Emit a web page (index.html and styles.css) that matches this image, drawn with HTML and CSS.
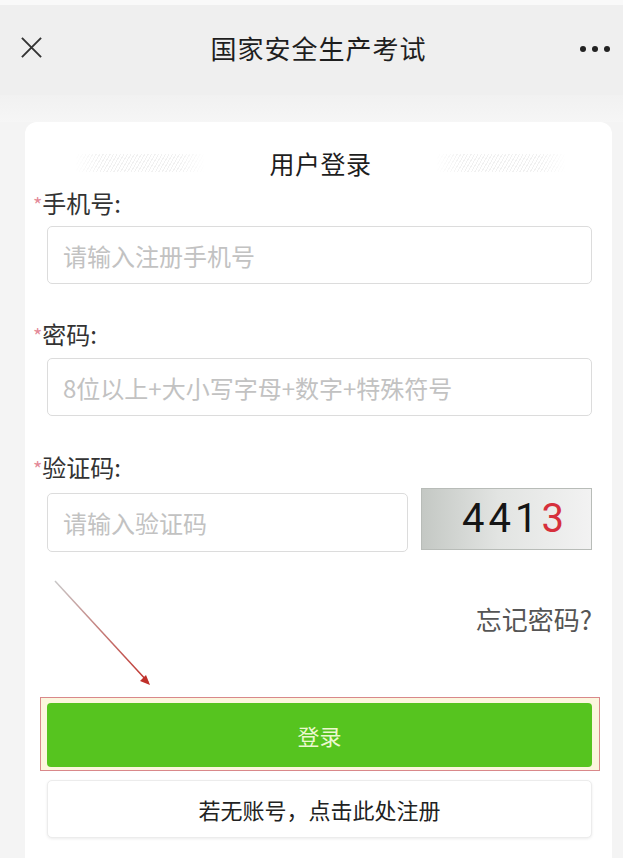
FILE: index.html
```html
<!DOCTYPE html>
<html lang="zh-CN">
<head>
<meta charset="utf-8">
<title>国家安全生产考试</title>
<link rel="stylesheet" href="styles.css">
</head>
<body>
<header class="topbar">
  <svg class="close" viewBox="0 0 24 24" width="24" height="24"><path d="M2 2 L22 22 M22 2 L2 22" stroke="#333" stroke-width="2" fill="none"/></svg>
  <h1 class="topbar-title">国家安全生产考试</h1>
  <span class="more"><i></i><i></i><i></i></span>
</header>
<div class="shade"></div>
<main class="page">
  <section class="card">
    <div class="card-head">
      <span class="hatch"></span>
      <h2 class="card-title">用户登录</h2>
      <span class="hatch"></span>
    </div>
    <div class="field field-phone">
      <label class="label"><span class="req">*</span>手机号:</label>
      <input class="input" type="text" placeholder="请输入注册手机号">
    </div>
    <div class="field field-pass">
      <label class="label"><span class="req">*</span>密码:</label>
      <input class="input" type="text" placeholder="8位以上+大小写字母+数字+特殊符号">
    </div>
    <div class="field field-code">
      <label class="label"><span class="req">*</span>验证码:</label>
      <div class="captcha-row">
        <input class="input input-code" type="text" placeholder="请输入验证码">
        <div class="captcha">441<span class="c-red">3</span></div>
      </div>
    </div>
    <div class="forgot">忘记密码?</div>
    <div class="login-wrap"><button class="login">登录</button></div>
    <button class="register">若无账号，点击此处注册</button>
  </section>
  <svg class="arrow" width="110" height="115" viewBox="0 0 110 115">
    <defs>
      <linearGradient id="ag" x1="0" y1="0" x2="1" y2="1">
        <stop offset="0" stop-color="#c8c8c8"/>
        <stop offset="1" stop-color="#c0302a"/>
      </linearGradient>
    </defs>
    <path d="M3 3 L96 104" stroke="url(#ag)" stroke-width="1.5" fill="none"/>
    <path d="M98 107 L88 103 L94 97 Z" fill="#c0302a"/>
  </svg>
</main>
</body>
</html>
```
FILE: styles.css
```css
* { box-sizing: border-box; }
html, body { margin: 0; padding: 0; }
body {
  width: 623px;
  height: 858px;
  overflow: hidden;
  background: #f4f4f4;
  font-family: "Noto Sans CJK SC", "Noto Sans", sans-serif;
  color: #333;
}
.topbar {
  position: relative;
  height: 95px;
  background: #efefef;
  border-top: 5px solid #f9f9f9;
  display: flex;
  align-items: center;
  justify-content: center;
  padding: 0 0 6px 14px;
}
.close {
  position: absolute;
  left: 20px;
  top: 31px;
  width: 23px;
  height: 23px;
}
.topbar-title {
  margin: 0;
  font-size: 26px;
  font-weight: 400;
  color: #1e1e1e;
  letter-spacing: 1px;
}
.more {
  position: absolute;
  right: 13px;
  top: 41px;
  display: flex;
  gap: 6px;
}
.more i {
  display: block;
  width: 6px;
  height: 6px;
  border-radius: 50%;
  background: #222;
}
.shade {
  height: 27px;
  background: linear-gradient(#f1f1f1, #f6f6f6);
}
.page {
  position: relative;
  padding: 0 11px 0 25px;
}
.card {
  background: #fff;
  border-radius: 12px 12px 0 0;
  padding: 0 20px 30px 8px;
  min-height: 740px;
}
.card-head {
  display: flex;
  align-items: center;
  justify-content: space-between;
  padding: 26px 26px 0 42px;
  height: 56px;
}
.hatch {
  width: 130px;
  height: 18px;
  background: repeating-linear-gradient(120deg, #e8e8e8 0 1px, #fff 1px 3px);
  opacity: 0.6;
  -webkit-mask-image: linear-gradient(90deg, transparent, #000 20%, #000 80%, transparent);
  mask-image: linear-gradient(90deg, transparent, #000 20%, #000 80%, transparent);
}
.card-title {
  margin: 0;
  font-size: 25px;
  line-height: 30px;
  font-weight: 400;
  color: #1e1e1e;
  letter-spacing: 0.5px;
}
.field { display: flex; flex-direction: column; }
.label {
  font-size: 24px;
  line-height: 28px;
  color: #333;
  margin-top: 11px;
}
.field-pass .label { margin-top: 36px; }
.field-code .label { margin-top: 37px; }
.req { color: #e48a98; font-size: 20px; }
.input {
  display: block;
  margin: 7px 0 0 14px;
  height: 58px;
  border: 1px solid #dcdcdc;
  border-radius: 5px;
  padding: 0 15px;
  font-family: inherit;
  font-size: 24px;
  color: #333;
  background: #fff;
  outline: none;
}
.input::placeholder { color: #c2c2c2; }
.field-pass .input { margin-top: 8px; }
.captcha-row {
  display: flex;
  align-items: flex-start;
  margin: 5px 0 0 14px;
  gap: 13px;
}
.input-code {
  margin: 5px 0 0 0;
  width: 361px;
  height: 59px;
}
.captcha {
  flex: 1;
  height: 62px;
  border: 1px solid #b8bcb8;
  background: linear-gradient(90deg, #c4c8c4 0%, #e2e4e2 45%, #f2f2f2 100%);
  font-family: Roboto, "Liberation Sans", sans-serif;
  font-size: 40px;
  line-height: 60px;
  color: #151515;
  text-align: right;
  padding-right: 23px;
  letter-spacing: 4px;
}
.c-red { color: #d6303c; }
.forgot {
  margin-top: 52px;
  text-align: right;
  font-size: 26px;
  line-height: 30px;
  color: #555;
}
.login-wrap {
  margin: 63px -8px 0 7px;
  border: 1px solid #d9888a;
  background: #fbf6de;
  padding: 5px 7px 3px 6px;
}
.login {
  display: block;
  width: 100%;
  height: 64px;
  border: none;
  border-radius: 4px;
  background: #56c41f;
  color: #ecf8cf;
  font-family: inherit;
  font-size: 22px;
}
.register {
  display: block;
  width: calc(100% - 14px);
  margin: 9px 0 0 14px;
  height: 58px;
  border: 1px solid #ececec;
  border-radius: 5px;
  background: #fff;
  box-shadow: 0 1px 3px rgba(0,0,0,0.08);
  color: #222;
  font-family: inherit;
  font-size: 22px;
}
.arrow {
  position: absolute;
  left: 52px;
  top: 456px;
}
```
